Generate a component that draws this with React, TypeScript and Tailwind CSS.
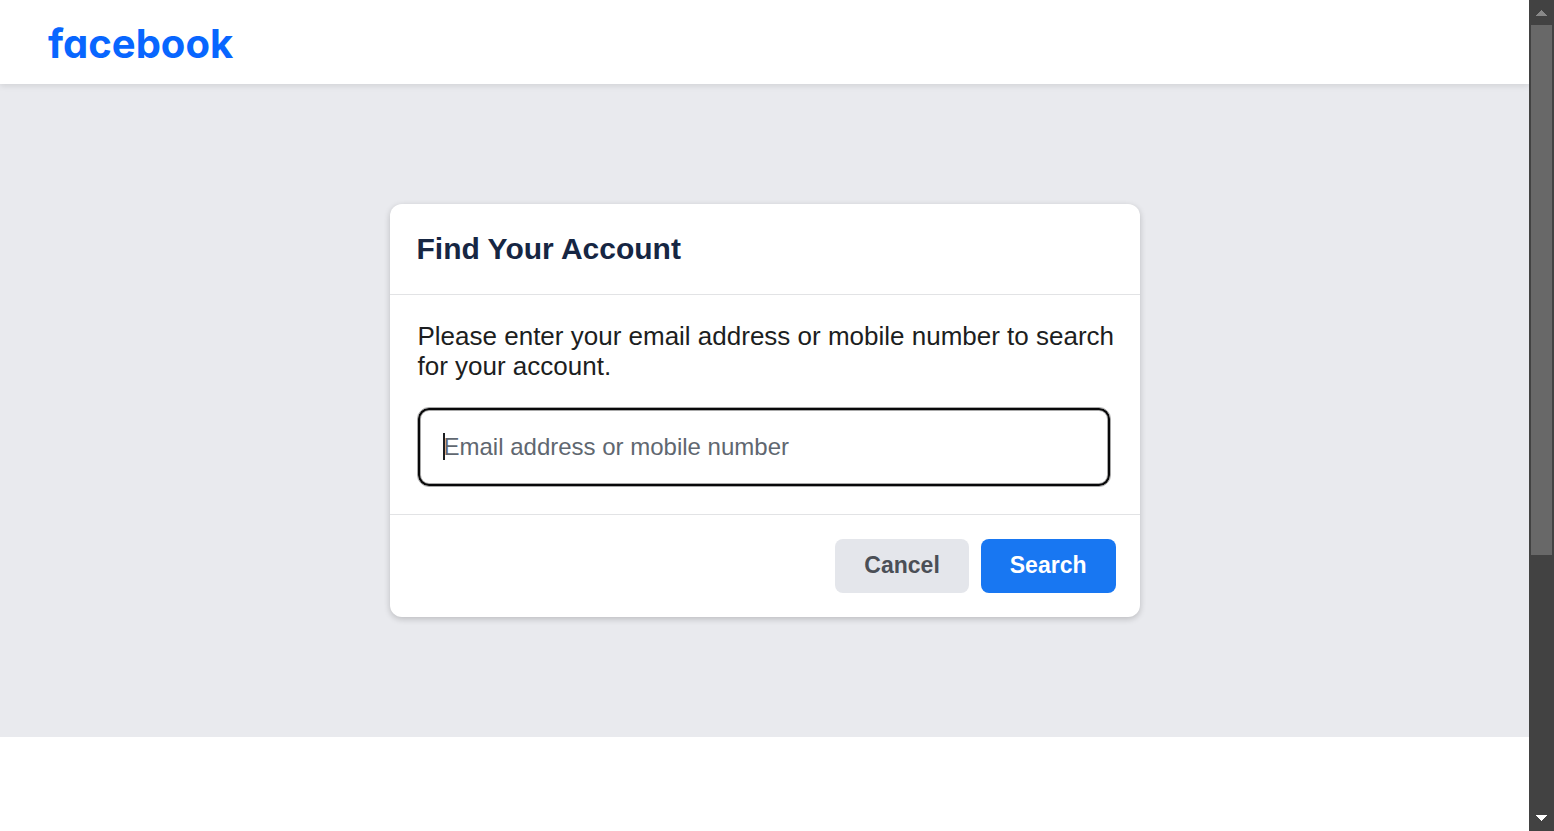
import React from "react";

function Scrollbar() {
  return (
    <div aria-hidden="true" className="relative flex w-[25px] shrink-0 flex-col items-center bg-[#424242]">
      <svg width="25" height="25" viewBox="0 0 25 25" shapeRendering="crispEdges" className="shrink-0">
        <path d="M12.5 10 18 16H7z" fill="#888888" />
      </svg>
      <div className="flex w-full flex-1 flex-col px-0.5">
        <div className="basis-[530px] bg-[#686868]" />
      </div>
      <svg width="25" height="25" viewBox="0 0 25 25" shapeRendering="crispEdges" className="shrink-0">
        <path d="M12.5 15 18 9H7z" fill="#ffffff" />
      </svg>
    </div>
  );
}

function SiteHeader() {
  return (
    <header className="relative flex h-[84px] items-center bg-white px-12 pt-1 shadow-[0_2px_6px_rgba(0,0,0,0.1)]">
      <a
        href="#home"
        className="font-['Inter',sans-serif] text-[40px] leading-[48px] font-bold text-[#0866ff] [font-feature-settings:'cv11']"
      >
        facebook
      </a>
    </header>
  );
}

function FindAccountCard() {
  return (
    <form
      onSubmit={(event) => event.preventDefault()}
      className="w-full max-w-[750px] rounded-xl bg-white shadow-[0_2px_6px_rgba(0,0,0,0.2)]"
    >
      <div className="border-b border-[#e2e3e5] px-[27px] py-[27px]">
        <h1 className="text-[30px] leading-9 font-bold text-[#162643]">Find Your Account</h1>
      </div>
      <div className="pt-[26px] pr-4 pb-[27px] pl-[27px]">
        <label htmlFor="identity" className="block pl-px text-[26px] leading-[30px] text-[#1c1e21]">
          Please enter your email address or mobile number to search for your account.
        </label>
        <div className="relative mt-[26px] mr-[13px]">
          <input
            id="identity"
            type="text"
            placeholder="Email address or mobile number"
            className="block h-20 w-full rounded-xl border border-[#a8a8a8] bg-white px-[26px] text-2xl text-[#1c1e21] shadow-[inset_0_0_0_2px_#080809,inset_0_0_0_3px_#a8a8a8] outline-none placeholder:text-[#606770]"
          />
          <span aria-hidden="true" className="absolute top-[26px] left-[26px] h-[27px] w-0.5 bg-[#1c1e21]" />
        </div>
      </div>
      <div className="flex justify-end gap-3 border-t border-[#e2e3e5] p-6 text-[23px] font-bold">
        <button type="button" className="h-[54px] rounded-lg bg-[#e4e6eb] px-[29px] pb-0.5 text-[#4b4f56]">
          Cancel
        </button>
        <button type="submit" className="h-[54px] rounded-lg bg-[#1877f2] px-[29px] pb-0.5 text-white">
          Search
        </button>
      </div>
    </form>
  );
}

export default function App() {
  return (
    <div className="flex min-h-screen bg-white font-['Liberation_Sans',Arial,sans-serif]">
      <div className="flex min-w-0 flex-1 flex-col">
        <SiteHeader />
        <main className="flex justify-center bg-[#e9eaee] py-[120px]">
          <FindAccountCard />
        </main>
      </div>
      <Scrollbar />
    </div>
  );
}
